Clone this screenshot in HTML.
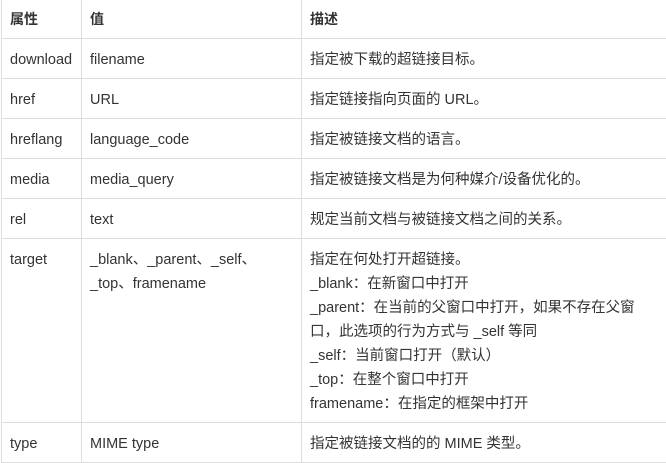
<!DOCTYPE html>
<html><head><meta charset="utf-8"><style>
html,body{margin:0;padding:0;background:#fff;width:666px;height:459px;overflow:hidden}
table{position:absolute;left:1px;top:-1px;border-collapse:collapse;width:667px;table-layout:fixed;font-family:"Liberation Sans","Noto Sans CJK SC",sans-serif;font-size:14.5px;color:#333}
td,th{border:1px solid #ddd;padding:9px 8px 6px;line-height:24px;vertical-align:top;text-align:left;white-space:nowrap}
th{font-weight:bold;padding:7px 8px 7px;font-size:14px}
td:last-child,th:last-child{border-right:none}
</style></head><body>
<table>
<colgroup><col style="width:80px"><col style="width:220px"><col></colgroup>
<tr><th>属性</th><th>值</th><th>描述</th></tr>
<tr><td>download</td><td>filename</td><td>指定被下载的超链接目标。</td></tr>
<tr><td>href</td><td>URL</td><td>指定链接指向页面的 URL。</td></tr>
<tr><td>hreflang</td><td>language_code</td><td>指定被链接文档的语言。</td></tr>
<tr><td>media</td><td>media_query</td><td>指定被链接文档是为何种媒介/设备优化的。</td></tr>
<tr><td>rel</td><td>text</td><td>规定当前文档与被链接文档之间的关系。</td></tr>
<tr><td>target</td><td>_blank、_parent、_self、<br>_top、framename</td><td>指定在何处打开超链接。<br>_blank：在新窗口中打开<br>_parent：在当前的父窗口中打开，如果不存在父窗<br>口，此选项的行为方式与 _self 等同<br>_self：当前窗口打开（默认）<br>_top：在整个窗口中打开<br>framename：在指定的框架中打开</td></tr>
<tr><td>type</td><td>MIME type</td><td>指定被链接文档的的 MIME 类型。</td></tr>
</table>
</body></html>
